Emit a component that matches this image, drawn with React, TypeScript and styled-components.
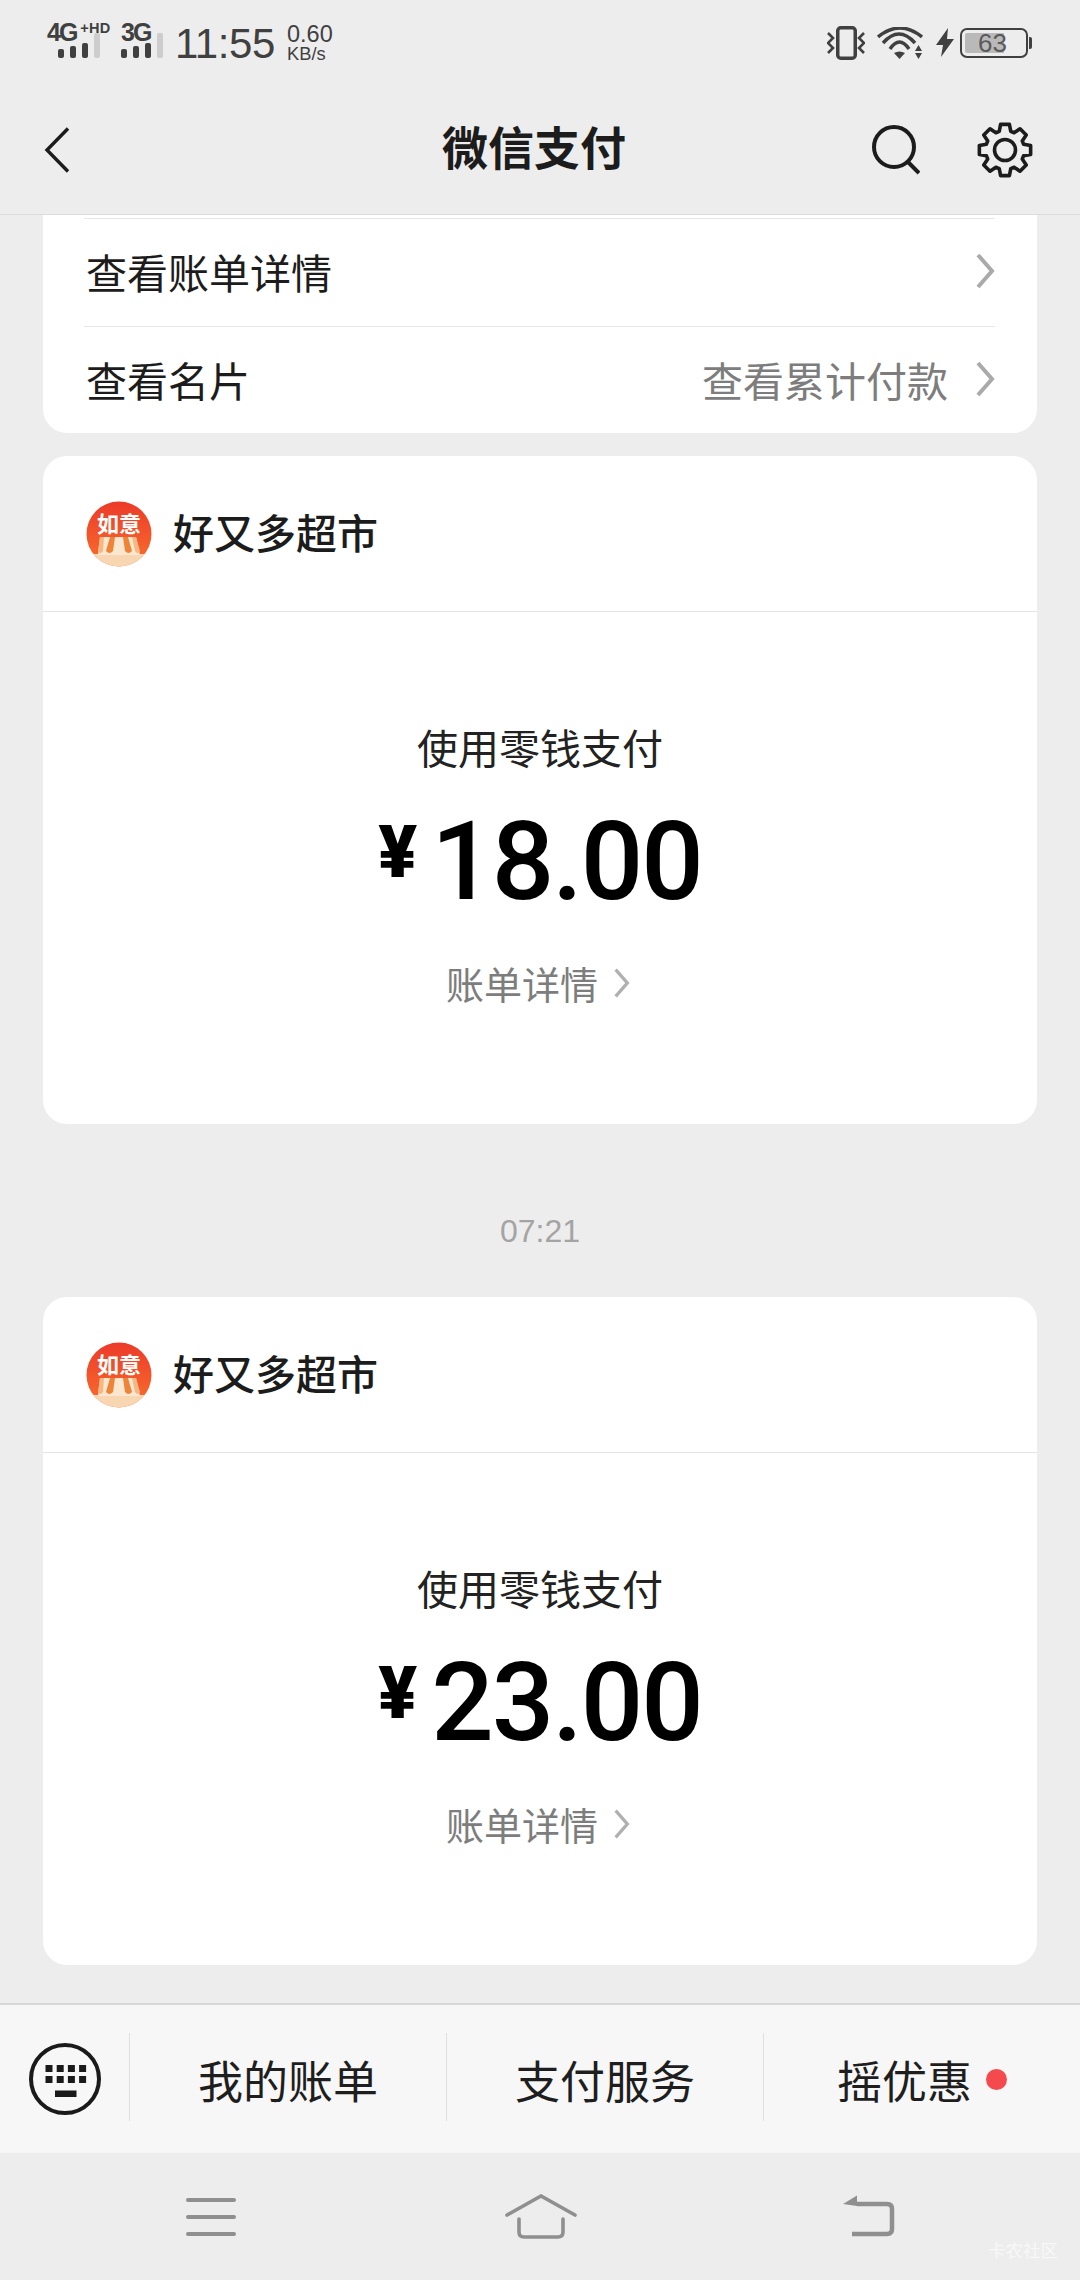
import React from "react";
import styled, { createGlobalStyle } from "styled-components";

const cjk = `"Noto Sans CJK SC", "Noto Sans", sans-serif`;

const Global = createGlobalStyle`
  html, body {
    margin: 0;
    padding: 0;
    background: #ededed;
  }
  * { box-sizing: border-box; }
`;

const Screen = styled.div`
  width: 1080px;
  height: 2280px;
  display: flex;
  flex-direction: column;
  overflow: hidden;
  background: #ededed;
  font-family: ${cjk};
  color: #1a1a1a;
`;

const StatusBar = styled.div`
  height: 88px;
  padding: 22px 48px 0 47px;
  display: flex;
  align-items: flex-start;
  justify-content: space-between;
  color: #404040;
`;

const NetGroup = styled.div`
  display: flex;
  align-items: flex-start;
`;

const DeviceGroup = styled.div`
  display: flex;
  align-items: center;
  margin-top: 3px;
`;

const Spacer = styled.span<{ $w: number }>`
  width: ${(p) => p.$w}px;
`;

const SignalBlock = styled.div<{ $w: number }>`
  width: ${(p) => p.$w}px;
  display: flex;
  flex-direction: column;
  align-items: flex-start;
`;

const NetLabel = styled.div`
  display: flex;
  align-items: flex-start;
  height: 21px;
  font-family: "Liberation Sans", sans-serif;
  font-weight: 700;
  font-size: 25px;
  line-height: 21px;
  letter-spacing: -2px;
`;

const NetSup = styled.span`
  margin-left: 4px;
  font-size: 14.5px;
  line-height: 13px;
  letter-spacing: 0.2px;
`;

const Bars = styled.div<{ $indent: number }>`
  display: flex;
  align-items: flex-end;
  gap: 6px;
  height: 15px;
  padding-left: ${(p) => p.$indent}px;
`;

const Bar = styled.i<{ $h: number; $off?: boolean }>`
  display: block;
  flex: none;
  width: 6px;
  height: ${(p) => p.$h}px;
  border-radius: 2px;
  background: ${(p) => (p.$off ? "#cdcdcd" : "#404040")};
`;

const Clock = styled.div`
  font-family: "Liberation Sans", sans-serif;
  font-size: 42px;
  line-height: 44px;
  letter-spacing: -0.4px;
  margin-right: 12px;
`;

const Speed = styled.div`
  margin-top: 2px;
  font-family: "Liberation Sans", sans-serif;
  font-size: 23.5px;
  line-height: 20px;
  display: flex;
  flex-direction: column;
`;

const SpeedUnit = styled.span`
  font-size: 18.3px;
  line-height: 19px;
`;

const BatteryBox = styled.div`
  position: relative;
  width: 68px;
  height: 30px;
  margin-left: 6px;
  border: 2px solid #404040;
  border-radius: 7px;
  padding: 3px;
  display: flex;
`;

const BatteryFill = styled.div`
  width: 39px;
  height: 100%;
  background: #b9b9b9;
  border-radius: 2px 0 0 2px;
`;

const BatteryText = styled.span`
  position: absolute;
  left: 16px;
  top: 0;
  font-family: "Liberation Sans", sans-serif;
  font-size: 26px;
  line-height: 26px;
  color: #5a5a5a;
`;

const BatteryTip = styled.span`
  width: 3px;
  height: 12px;
  margin-left: 1px;
  background: #404040;
  border-radius: 0 2px 2px 0;
`;

const Header = styled.header`
  height: 127px;
  padding: 0 47px 3px 44px;
  display: flex;
  align-items: center;
  justify-content: space-between;
  border-bottom: 1px solid #dcdcdc;
  position: relative;
`;

const HeaderTitle = styled.div`
  position: absolute;
  left: 0;
  right: 12px;
  top: 24px;
  text-align: center;
  font-size: 46px;
  line-height: 66px;
  font-weight: 700;
  color: #1c1c1c;
`;

const HeaderIcons = styled.div`
  display: flex;
  align-items: center;
  gap: 57px;
`;

const Feed = styled.main`
  flex: 1;
  padding: 0 43px;
  display: flex;
  flex-direction: column;
`;

const LinksCard = styled.section`
  background: #fff;
  border-radius: 0 0 24px 24px;
  padding: 3px 42px 0 41px;
  height: 218px;
`;

const LinkRow = styled.div`
  height: 108px;
  display: flex;
  align-items: center;
  justify-content: space-between;
  border-top: 1px solid #e8e8e8;
  font-size: 41px;
  line-height: 56px;
  color: #1c1c1c;
  padding: 0 0 3px 2px;
`;

const LinkAside = styled.div`
  display: flex;
  align-items: center;
  gap: 27px;
  color: #7d7d7d;
`;

const PayCard = styled.section<{ $top: number }>`
  margin-top: ${(p) => p.$top}px;
  height: 668px;
  background: #fff;
  border-radius: 24px;
  display: flex;
  flex-direction: column;
`;

const Merchant = styled.div`
  height: 156px;
  padding: 0 43px;
  display: flex;
  align-items: center;
  gap: 21px;
  border-bottom: 1px solid #e4e4e4;
  font-size: 41px;
  font-weight: 500;
  color: #1c1c1c;
`;

const MerchantName = styled.span`
  margin-bottom: 5px;
`;

const PayBody = styled.div`
  flex: 1;
  padding-top: 105px;
  display: flex;
  flex-direction: column;
  align-items: center;
`;

const PayMethod = styled.div`
  font-size: 41px;
  line-height: 58px;
  color: #222;
`;

const Amount = styled.div`
  height: 130px;
  margin-top: 22px;
  display: flex;
  align-items: flex-start;
  color: #000;
  font-family: Roboto, "Liberation Sans", sans-serif;
  font-weight: 500;
`;

const Currency = styled.span`
  font-size: 72px;
  line-height: 111px;
  font-weight: 900;
  margin-right: 14px;
`;

const Digits = styled.span`
  font-size: 110px;
  line-height: 130px;
  letter-spacing: -2px;
`;

const DetailLink = styled.div`
  margin: 28px 4px 0 0;
  display: flex;
  align-items: center;
  gap: 15px;
  font-size: 38px;
  line-height: 56px;
  color: #7d7d7d;
`;

const TimeStamp = styled.div`
  margin-top: 87px;
  text-align: center;
  font-family: "Liberation Sans", sans-serif;
  font-size: 32px;
  line-height: 40px;
  color: #a4a4a4;
`;

const Footer = styled.div`
  height: 150px;
  border-top: 2px solid #d8d8d8;
  background: #f7f7f7;
  display: grid;
  grid-template-columns: 129px 317px 317px 1fr;
  align-items: start;
`;

const KeyCell = styled.div`
  padding: 38px 0 0 29px;
`;

const MenuCell = styled.div`
  display: flex;
  align-items: center;
  justify-content: center;
  gap: 14px;
  height: 88px;
  margin-top: 28px;
  padding-top: 4px;
  font-size: 45px;
  color: #1e1e1e;
  border-left: 1px solid #e0e0e0;
`;

const Dot = styled.span`
  width: 21px;
  height: 21px;
  border-radius: 50%;
  background: #f4494d;
`;

const NavBar = styled.nav`
  height: 127px;
  position: relative;
  display: flex;
  padding-top: 41px;
  background: #ededed;
`;

const NavSlot = styled.div<{ $w: number; $pad: number }>`
  width: ${(p) => p.$w}px;
  padding-left: ${(p) => p.$pad}px;
`;

const Watermark = styled.span`
  position: absolute;
  right: 22px;
  bottom: 18px;
  font-size: 17.5px;
  line-height: 24px;
  color: #f8f8f8;
`;

const Chevron = ({ small }: { small?: boolean }) => (
  <svg width={small ? 17 : 20} height={small ? 30 : 36} viewBox="0 0 20 36" fill="none">
    <path d="M3 2l14 16L3 34" stroke={small ? "#b0b0b0" : "#aaa"} strokeWidth="4" />
  </svg>
);

const Logo = () => (
  <svg width="66" height="66" viewBox="0 0 66 66">
    <defs>
      <linearGradient id="logoBg" x1="0" y1="0" x2="0" y2="1">
        <stop offset="0" stopColor="#ec3a2a" />
        <stop offset="1" stopColor="#f9702c" />
      </linearGradient>
      <clipPath id="logoClip">
        <circle cx="33" cy="33" r="32.5" />
      </clipPath>
    </defs>
    <circle cx="33" cy="33" r="32.5" fill="url(#logoBg)" />
    <g clipPath="url(#logoClip)">
      <path d="M0 53h66v13H0z" fill="#f9d6b2" />
      <path d="M14 36h36l4 18H12z" fill="#fbe6cf" />
      <path d="M24 36h5l-2 14q-3.500 4-7 0zM37 36h5l4 14q-3.500 4-7 0z" fill="#ee8438" />
      <path d="M14 36h4l-1 14q-2.500 4-5 0zM46 36h4l4 14q-2.500 4-5 0z" fill="#f5b884" />
    </g>
    <text x="33" y="31" textAnchor="middle" fontSize="22" fontWeight="700" fill="#fff" fontFamily={cjk}>
      如意
    </text>
  </svg>
);

const Wifi = () => (
  <svg width="46" height="32" viewBox="0 0 46 32" fill="none" stroke="#404040" strokeWidth="3.400">
    <path d="M1 10Q23-8 45 10" />
    <path d="M6 16Q22-2 38 16" />
    <path d="M13 22Q22.500 8 32 22" />
    <path d="M17 26q5.500-3 11 0l-5.500 6z" fill="#404040" stroke="none" />
    <path d="M41.500 18l3.500 6h-7zM38 26h7l-3.500 6z" fill="#404040" stroke="none" />
  </svg>
);

const Vibrate = () => (
  <svg width="38" height="36" viewBox="0 0 38 36" fill="none" stroke="#404040">
    <rect x="10.750" y="2.750" width="17.500" height="30.500" rx="3" strokeWidth="3.500" />
    <path d="M1 8l5 5-5 5 5 5-5 5M37 8l-5 5 5 5-5 5 5 5" strokeWidth="2.600" />
  </svg>
);

const Bolt = () => (
  <svg width="18" height="30" viewBox="0 0 18 30">
    <path d="M12 0L0 17h7L5 29l13-18h-7z" fill="#404040" />
  </svg>
);

const Back = () => (
  <svg width="26" height="46" viewBox="0 0 26 46" fill="none">
    <path d="M24 1.500L3 23l21 21.500" stroke="#1c1c1c" strokeWidth="3.400" />
  </svg>
);

const Search = () => (
  <svg width="48" height="50" viewBox="0 0 48 50" fill="none">
    <circle cx="22" cy="22" r="20" stroke="#1c1c1c" strokeWidth="4" />
    <path d="M35 36l12 12" stroke="#1c1c1c" strokeWidth="4" />
  </svg>
);

const Gear = () => {
  const teeth = Array.from({ length: 8 }, (_, i) => {
    const a = (i * Math.PI) / 4;
    const pt = (r: number, d: number) =>
      `${(28 + r * Math.sin(a + d)).toFixed(2)} ${(28 - r * Math.cos(a + d)).toFixed(2)}`;
    return `${i === 0 ? "M" : "L"}${pt(19.5, -0.3)}L${pt(26, -0.17)}L${pt(26, 0.17)}L${pt(19.5, 0.3)}`;
  }).join("");
  return (
    <svg width="56" height="56" viewBox="0 0 56 56" fill="none">
      <path d={`${teeth}Z`} stroke="#1c1c1c" strokeWidth="3.600" strokeLinejoin="round" />
      <circle cx="28" cy="28" r="10.500" stroke="#1c1c1c" strokeWidth="3.600" />
    </svg>
  );
};

const Keyboard = () => (
  <svg width="72" height="72" viewBox="0 0 72 72" fill="#1a1a1a">
    <circle cx="36" cy="36" r="34" fill="none" stroke="#1a1a1a" strokeWidth="4" />
    {[0, 1].map((r) =>
      [0, 1, 2, 3].map((c) => <rect key={`${r}-${c}`} x={16.5 + c * 11.2} y={22 + r * 11} width="7" height="7" />)
    )}
    <rect x="26" y="47.500" width="21.500" height="6.500" />
  </svg>
);

const NavMenu = () => (
  <svg width="50" height="44" viewBox="0 0 50 44" fill="none" stroke="#8f8f8f" strokeWidth="4" strokeLinecap="round">
    <path d="M2 6h46M2 23h46M2 40h46" />
  </svg>
);

const NavHome = () => (
  <svg width="72" height="46" viewBox="0 0 72 46" fill="none" stroke="#8f8f8f" strokeWidth="3.600" strokeLinecap="round">
    <path d="M2 21L36 2l34 19" />
    <path d="M14 25v13q0 5 5 5h34q5 0 5-5V25" />
  </svg>
);

const NavBack = () => (
  <svg width="52" height="44" viewBox="0 0 52 44" fill="none">
    <path d="M14 10h30q5 0 5 5v20q0 5-5 5H9" stroke="#8f8f8f" strokeWidth="4.500" />
    <path d="M0 10L14 1.500V12z" fill="#8f8f8f" />
  </svg>
);

const signalBars = (
  <>
    <Bar $h={9} />
    <Bar $h={12} />
    <Bar $h={15} />
    <Bar $h={25} $off />
  </>
);

const PayBlock = ({ amount, top }: { amount: string; top: number }) => (
  <PayCard $top={top}>
    <Merchant>
      <Logo />
      <MerchantName>好又多超市</MerchantName>
    </Merchant>
    <PayBody>
      <PayMethod>使用零钱支付</PayMethod>
      <Amount>
        <Currency>¥</Currency>
        <Digits>{amount}</Digits>
      </Amount>
      <DetailLink>
        账单详情
        <Chevron small />
      </DetailLink>
    </PayBody>
  </PayCard>
);

export default function App() {
  return (
    <Screen>
      <Global />
      <StatusBar>
        <NetGroup>
          <SignalBlock $w={74}>
            <NetLabel>
              4G<NetSup>+HD</NetSup>
            </NetLabel>
            <Bars $indent={11}>{signalBars}</Bars>
          </SignalBlock>
          <SignalBlock $w={54}>
            <NetLabel>3G</NetLabel>
            <Bars $indent={0}>{signalBars}</Bars>
          </SignalBlock>
          <Clock>11:55</Clock>
          <Speed>
            0.60
            <SpeedUnit>KB/s</SpeedUnit>
          </Speed>
        </NetGroup>
        <DeviceGroup>
          <Vibrate />
          <Spacer $w={12} />
          <Wifi />
          <Spacer $w={13} />
          <Bolt />
          <BatteryBox>
            <BatteryFill />
            <BatteryText>63</BatteryText>
          </BatteryBox>
          <BatteryTip />
        </DeviceGroup>
      </StatusBar>
      <Header>
        <Back />
        <HeaderTitle>微信支付</HeaderTitle>
        <HeaderIcons>
          <Search />
          <Gear />
        </HeaderIcons>
      </Header>
      <Feed>
        <LinksCard>
          <LinkRow>
            查看账单详情
            <Chevron />
          </LinkRow>
          <LinkRow>
            查看名片
            <LinkAside>
              查看累计付款
              <Chevron />
            </LinkAside>
          </LinkRow>
        </LinksCard>
        <PayBlock amount="18.00" top={23} />
        <TimeStamp>07:21</TimeStamp>
        <PayBlock amount="23.00" top={46} />
      </Feed>
      <Footer>
        <KeyCell>
          <Keyboard />
        </KeyCell>
        <MenuCell>我的账单</MenuCell>
        <MenuCell>支付服务</MenuCell>
        <MenuCell>
          摇优惠
          <Dot />
        </MenuCell>
      </Footer>
      <NavBar>
        <NavSlot $w={360} $pad={186}>
          <NavMenu />
        </NavSlot>
        <NavSlot $w={483} $pad={145}>
          <NavHome />
        </NavSlot>
        <NavSlot $w={237} $pad={0}>
          <NavBack />
        </NavSlot>
        <Watermark>卡农社区</Watermark>
      </NavBar>
    </Screen>
  );
}
